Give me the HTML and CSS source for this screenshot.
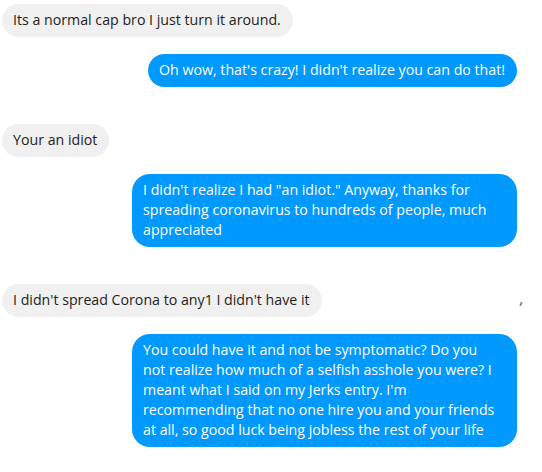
FILE: index.html
```html
<!DOCTYPE html>
<html lang="en">
<head>
    <meta charset="UTF-8">
    <title>Chat</title>
    <link rel="stylesheet" href="styles.css">
</head>
<body>
    <div class="chat">
        <div class="row them"><div class="bubble">Its a normal cap bro I just turn it around.</div></div>
        <div class="row me"><div class="bubble">Oh wow, that's crazy! I didn't realize you can do that!</div></div>
        <div class="row them gap"><div class="bubble">Your an idiot</div></div>
        <div class="row me"><div class="bubble long">I didn't realize I had "an idiot." Anyway, thanks for<br>spreading coronavirus to hundreds of people, much<br>appreciated</div></div>
        <div class="row them gap"><div class="bubble">I didn't spread Corona to any1 I didn't have it</div><span class="seen"></span></div>
        <div class="row me"><div class="bubble long">You could have it and not be symptomatic? Do you<br>not realize how much of a selfish asshole you were? I<br>meant what I said on my Jerks entry. I'm<br>recommending that no one hire you and your friends<br>at all, so good luck being jobless the rest of your life</div></div>
    </div>
</body>
</html>
```
FILE: styles.css
```css
body {
    margin: 0;
    background-color: #ffffff;
    font-family: "Open Sans", Arial, sans-serif;
    font-size: 14.2px;
    line-height: 20px;
}
.chat {
    display: flex;
    flex-direction: column;
    gap: 17px;
    padding: 4px 25px 0 2px;
}
.row {
    display: flex;
    position: relative;
}
.row.me {
    justify-content: flex-end;
}
.row.gap {
    margin-top: 20px;
}
.bubble {
    padding: 6px 12px 7px 11px;
    border-radius: 17px;
}
.bubble.long {
    width: 385px;
    box-sizing: border-box;
}
.them .bubble {
    background-color: #f1f0f0;
    color: #1c1e21;
}
.me .bubble {
    background-color: #0099ff;
    color: #ffffff;
    border-radius: 18px;
}
.seen {
    position: absolute;
    right: -5px;
    top: 18px;
    width: 2px;
    height: 4px;
    background-color: #8a8d91;
    transform: rotate(20deg);
}
```
